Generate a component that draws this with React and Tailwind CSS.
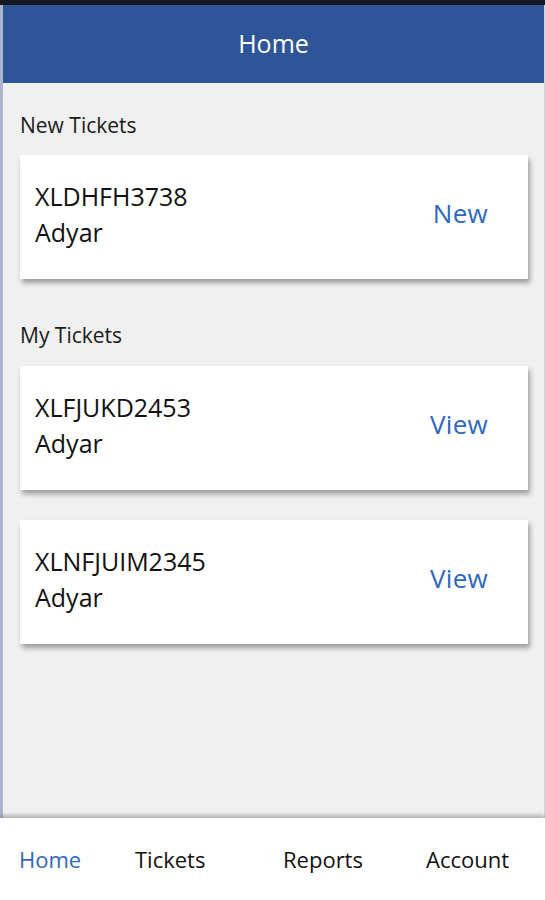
export default function App() {
  const myTickets = [
    { id: 'XLFJUKD2453', area: 'Adyar' },
    { id: 'XLNFJUIM2345', area: 'Adyar' },
  ]

  return (
    <div
      className="w-[545px] h-[900px] flex flex-col bg-white overflow-hidden"
      style={{ fontFamily: '"Open Sans", "Noto Sans", sans-serif' }}
    >
      {/* top strip */}
      <div className="h-[5px] bg-[#141821]" />

      <div className="flex-1 flex flex-col border-l-[3px] border-[#aeb3cc] border-r border-r-[#d4d4d8]">
        {/* Header */}
        <div className="h-[78px] bg-[#2d5597] flex items-center justify-center">
          <span className="text-white text-[25px] font-medium">Home</span>
        </div>

        {/* Content */}
        <div className="flex-1 bg-[#f0f0f0] pl-[17px] pt-[32px]">
          <h3 className="text-[21px] text-[#1a1a1a] leading-none">New Tickets</h3>
          <Card id="XLDHFH3738" area="Adyar" action="New" className="mt-[19px]" />

          <h3 className="text-[21px] text-[#1a1a1a] leading-none mt-[46px]">My Tickets</h3>
          <div className="mt-[20px] flex flex-col gap-[30px]">
            {myTickets.map((t) => (
              <Card key={t.id} id={t.id} area={t.area} action="View" />
            ))}
          </div>
        </div>
      </div>

      {/* Bottom nav */}
      <div className="h-[82px] bg-white shadow-[0_-3px_4px_rgba(0,0,0,0.25)] relative flex items-center text-[22px] text-[#111]">
        <span className="absolute left-[19px] text-[#2f67c0]">Home</span>
        <span className="absolute left-[135px]">Tickets</span>
        <span className="absolute left-[283px]">Reports</span>
        <span className="absolute left-[426px]">Account</span>
      </div>
    </div>
  )
}

function Card({ id, area, action, className = '' }) {
  return (
    <div
      className={`h-[124px] w-[508px] bg-white shadow-[2px_4px_5px_rgba(0,0,0,0.35)] flex items-center justify-between pl-[15px] pr-[40px] pb-[7px] ${className}`}
    >
      <div className="text-[25px] text-[#111] leading-[36px]">
        <div>{id}</div>
        <div>{area}</div>
      </div>
      <span className="text-[26px] text-[#2f67c0] tracking-[0.3px]">{action}</span>
    </div>
  )
}
